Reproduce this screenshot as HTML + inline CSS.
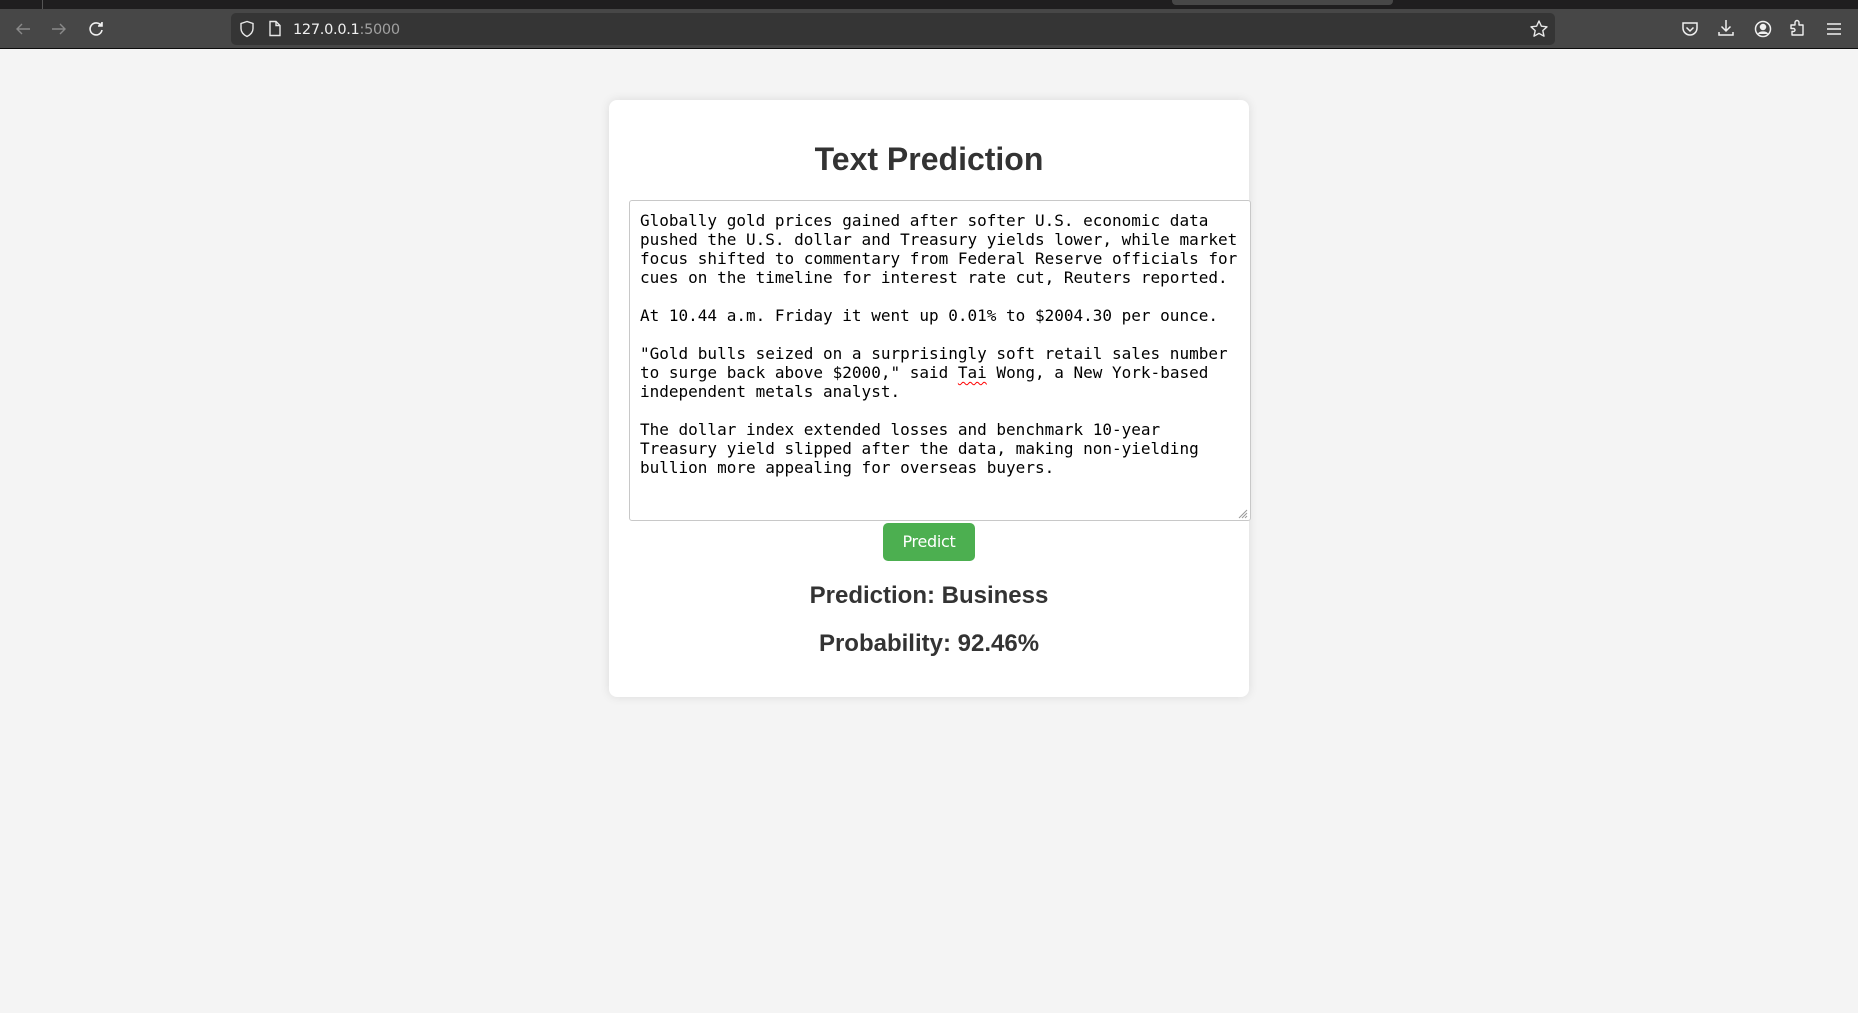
<!DOCTYPE html>
<html><head><meta charset="utf-8"><style>
*{box-sizing:border-box}
html,body{margin:0;padding:0;width:1858px;height:1013px;overflow:hidden;background:#f4f4f4;font-family:"Liberation Sans",Arial,sans-serif}
.tabs{position:absolute;left:0;top:0;width:1858px;height:9px;background:#1f1e1f}
.tabs .t{position:absolute;left:1172px;top:0;width:221px;height:5px;background:#474747;border-radius:0 0 4px 4px}
.tabs .sep{position:absolute;left:42px;top:0;width:1px;height:9px;background:#555}
.bar{position:absolute;left:0;top:9px;width:1858px;height:40px;background:#474747;border-bottom:1px solid #0c0c0c}
.url{position:absolute;left:231px;top:4px;width:1324px;height:32px;background:#353535;border-radius:5px}
.url .txt{position:absolute;left:62px;top:9px;font:14.5px "DejaVu Sans",sans-serif;color:#f0f0f0;letter-spacing:-0.3px}
.url .txt span{color:#a0a0a0}
svg{position:absolute}
.card{position:absolute;left:609px;top:100px;width:640px;height:597px;background:#fff;border-radius:8px;box-shadow:0 0 10px rgba(0,0,0,0.1)}
h1{position:absolute;left:0;width:640px;top:141px;margin:0;text-align:center;font-size:32px;font-weight:bold;color:#333}
.ta{position:absolute;left:629px;top:200px;width:622px;height:321px;border:1px solid #c8c8c8;border-radius:3px;background:#fff;padding:10px 10px;font:16px/19px "DejaVu Sans Mono",monospace;color:#000;white-space:pre;overflow:hidden}
.sp{text-decoration:underline wavy red;text-decoration-thickness:1px;text-underline-offset:3px}
.btn{position:absolute;left:883px;top:523px;width:92px;height:38px;background:#4caf50;border-radius:5px;color:#fff;font:16px/38px "DejaVu Sans",sans-serif;text-align:center;letter-spacing:-0.3px}
h2{position:absolute;left:609px;width:640px;margin:0;text-align:center;font-size:24px;font-weight:bold;color:#333}
</style></head><body>
<div class="tabs"><div class="sep"></div><div class="t"></div></div>
<div class="bar">
<svg style="left:14px;top:11px" width="18" height="18" viewBox="0 0 18 18" fill="none" stroke="#8a8a8a" stroke-width="1.4"><path d="M16 9H3M8 4L3 9l5 5"/></svg>
<svg style="left:50px;top:11px" width="18" height="18" viewBox="0 0 18 18" fill="none" stroke="#8a8a8a" stroke-width="1.4"><path d="M2 9h13M10 4l5 5-5 5"/></svg>
<svg style="left:87px;top:11px" width="18" height="18" viewBox="0 0 18 18" fill="none" stroke="#f0f0f0" stroke-width="1.6"><path d="M14 5.5A6 6 0 1 0 15 10"/><path d="M15 2v4h-4" fill="#f0f0f0"/></svg>
<div class="url">
<svg style="left:8px;top:7px" width="16" height="18" viewBox="0 0 16 18" fill="none" stroke="#e8e8e8" stroke-width="1.4"><path d="M8 1.5L2 3.5v5c0 4 3 6.5 6 8 3-1.5 6-4 6-8v-5z"/></svg>
<svg style="left:37px;top:7px" width="14" height="17" viewBox="0 0 14 17" fill="none" stroke="#e8e8e8" stroke-width="1.4"><path d="M2 1.5h6l4 4v10H2z"/><path d="M8 1.5v4h4"/></svg>
<div class="txt">127.0.0.1<span>:5000</span></div>
<svg style="left:1298px;top:6px" width="20" height="20" viewBox="0 0 20 20" fill="none" stroke="#e8e8e8" stroke-width="1.4" stroke-linejoin="round"><path d="M10 2l2.4 5.2 5.6.6-4.2 3.8 1.2 5.6L10 14.4l-5 2.8 1.2-5.6L2 7.8l5.6-.6z"/></svg>
</div>
<svg style="left:1681px;top:11px" width="18" height="18" viewBox="0 0 18 18" fill="none" stroke="#f0f0f0" stroke-width="1.5"><path d="M2 3h14v5a7 7 0 0 1-14 0z"/><path d="M5.5 7.5L9 11l3.5-3.5"/></svg>
<svg style="left:1717px;top:10px" width="18" height="18" viewBox="0 0 18 18" fill="none" stroke="#f0f0f0" stroke-width="1.5"><path d="M9 1v11M4.5 7.5L9 12l4.5-4.5M2 13v3h14v-3"/></svg>
<svg style="left:1754px;top:11px" width="18" height="18" viewBox="0 0 18 18" fill="none" stroke="#f0f0f0" stroke-width="1.5"><circle cx="9" cy="9" r="7.5"/><circle cx="9" cy="7" r="2.5" fill="#f0f0f0"/><path d="M4.5 14c1-2.5 8-2.5 9 0" fill="#f0f0f0"/></svg>
<svg style="left:1789px;top:10px" width="18" height="18" viewBox="0 0 18 18" fill="none" stroke="#f0f0f0" stroke-width="1.4" stroke-linejoin="round"><path d="M2 6h4V3.5a2 2 0 0 1 4 0V6h4v10H3v-3.5h1.5a1.5 1.5 0 0 0 0-3H2z"/></svg>
<svg style="left:1825px;top:11px" width="18" height="18" viewBox="0 0 18 18" fill="none" stroke="#f0f0f0" stroke-width="1.5"><path d="M2 4h14M2 9h14M2 14h14"/></svg>
</div>
<div class="card"></div>
<h1 style="left:609px">Text Prediction</h1>
<div class="ta">Globally gold prices gained after softer U.S. economic data
pushed the U.S. dollar and Treasury yields lower, while market
focus shifted to commentary from Federal Reserve officials for
cues on the timeline for interest rate cut, Reuters reported.

At 10.44 a.m. Friday it went up 0.01% to $2004.30 per ounce.

"Gold bulls seized on a surprisingly soft retail sales number
to surge back above $2000," said <span class="sp">Tai</span> Wong, a New York-based
independent metals analyst.

The dollar index extended losses and benchmark 10-year
Treasury yield slipped after the data, making non-yielding
bullion more appealing for overseas buyers.</div>
<svg style="left:1238px;top:509px" width="10" height="10" viewBox="0 0 10 10" stroke="#999" stroke-width="1"><path d="M9 1L1 9M9 4L4 9M9 7L7 9"/></svg>
<div class="btn">Predict</div>
<h2 style="top:582px">Prediction: Business</h2>
<h2 style="top:630px">Probability: 92.46%</h2>
</body></html>
